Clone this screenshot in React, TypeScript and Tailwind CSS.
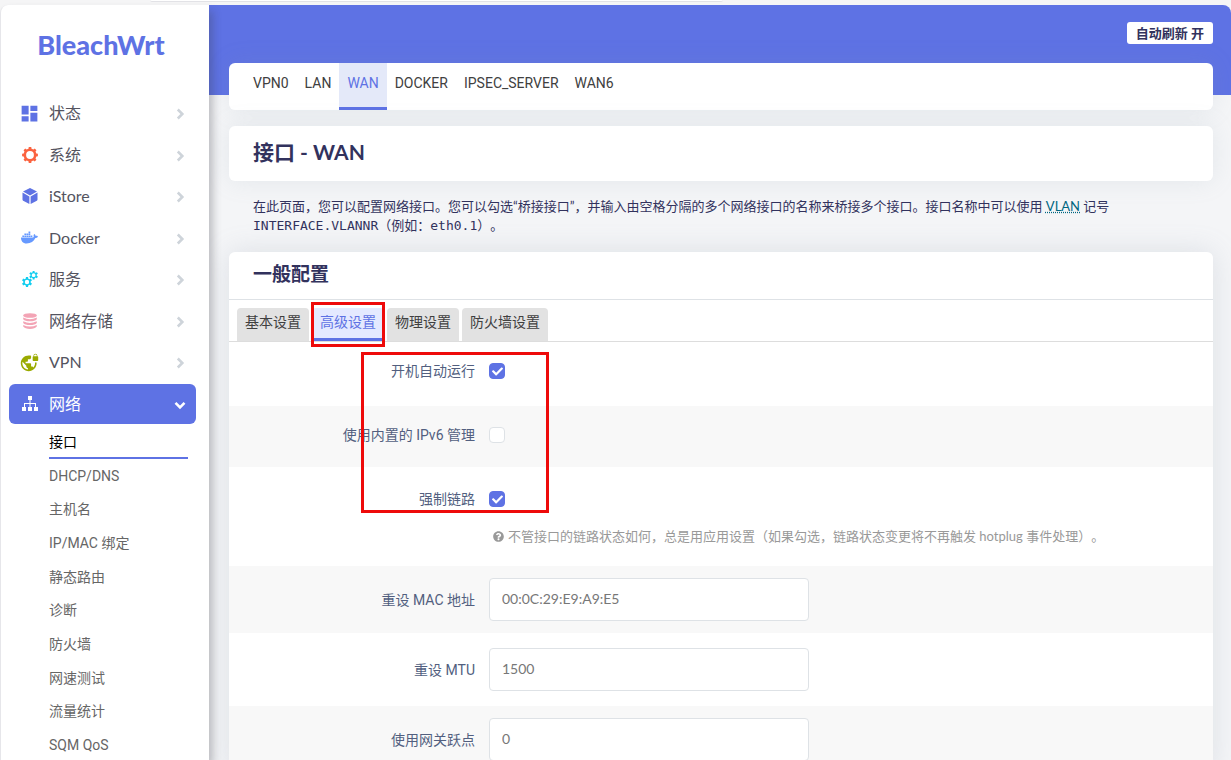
import { useState } from 'react';
import type { ReactNode } from 'react';
import { MdDashboard, MdVpnLock } from 'react-icons/md';
import { FaDocker, FaQuestionCircle, FaCheck } from 'react-icons/fa';

function gearPath(cx: number, cy: number, teeth: number, inner: number, outer: number) {
  const step = (Math.PI * 2) / teeth;
  const points: string[] = [];
  for (let i = 0; i < teeth; i++) {
    const base = i * step - Math.PI / 2;
    const corners: [number, number][] = [
      [-0.3, inner],
      [-0.2, outer],
      [0.2, outer],
      [0.3, inner],
    ];
    corners.forEach(([offset, radius]) => {
      const a = base + offset * step;
      points.push(`${(cx + radius * Math.cos(a)).toFixed(2)} ${(cy + radius * Math.sin(a)).toFixed(2)}`);
    });
  }
  return `M${points.join('L')}Z`;
}

function ring(cx: number, cy: number, r: number) {
  return `M${cx - r} ${cy}a${r} ${r} 0 1 0 ${r * 2} 0a${r} ${r} 0 1 0 ${-r * 2} 0Z`;
}

const GearIcon = () => (
  <svg viewBox="0 0 16 16" className="size-4 fill-[#fb6340]" aria-hidden="true">
    <path fillRule="evenodd" d={gearPath(8, 8, 8, 6.5, 8) + ring(8, 8, 3.9)} />
  </svg>
);

const CubeIcon = () => (
  <svg viewBox="0 0 16 16" className="size-4 fill-[#5e72e4]" aria-hidden="true">
    <path d="M8 0L15 3.6L8 7.4L1 3.6Z" />
    <path d="M.5 4.6L7.4 8.4V16L1.2 12.7Q.5 12.3.5 11.5Z" />
    <path d="M15.500 4.600L8.600 8.400V16L14.800 12.700Q15.500 12.300 15.500 11.500Z" />
  </svg>
);

const GearsIcon = () => (
  <svg viewBox="0 0 16 16" className="size-4 fill-[#11cdef]" aria-hidden="true">
    <path fillRule="evenodd" d={gearPath(5, 11, 6, 3.8, 5.2) + ring(5, 11, 2.2)} />
    <path fillRule="evenodd" d={gearPath(11.6, 4.2, 6, 3.2, 4.5) + ring(11.6, 4.2, 1.9)} />
  </svg>
);

const DisksIcon = () => (
  <svg viewBox="0 0 16 16" className="size-4 fill-[#f3a4b5]" aria-hidden="true">
    <ellipse cx="8" cy="2.500" rx="6.800" ry="2.300" />
    <path d="M1.200 4.600Q8 7.800 14.800 4.600V6.200Q13 8.300 8 8.300T1.200 6.200Z" />
    <path d="M1.200 8.300Q8 11.500 14.800 8.300V9.900Q13 12 8 12T1.200 9.900Z" />
    <path d="M1.200 12Q8 15.200 14.800 12V13.600Q13 15.900 8 15.900T1.200 13.600Z" />
  </svg>
);

const TreeIcon = () => (
  <svg viewBox="0 0 16 16" className="size-4 fill-white" aria-hidden="true">
    <path d="M6 0h4v4H8.500v3H14v4h2v4h-4v-4h1V8H8.500v3h1.500v4H6v-4h1.500V8H3v3h1v4H0v-4h2V7h5.500V4H6Z" />
  </svg>
);

const Chevron = ({ open }: { open?: boolean }) => (
  <svg
    viewBox="0 0 12 12"
    className={open ? 'mt-0.5 size-3 fill-none stroke-white' : 'mt-0.5 size-3 fill-none stroke-[#ced4da]'}
    strokeWidth="2.600"
    aria-hidden="true"
  >
    <path d={open ? 'M1.500 3.800L6 8.300L10.500 3.800' : 'M3.800 1.500L8.300 6L3.800 10.500'} />
  </svg>
);

const menu: { label: string; icon: ReactNode; active?: boolean }[] = [
  { label: '状态', icon: <MdDashboard className="size-[21px] shrink-0 text-[#5e72e4]" /> },
  { label: '系统', icon: <GearIcon /> },
  { label: 'iStore', icon: <CubeIcon /> },
  { label: 'Docker', icon: <FaDocker className="size-[17px] shrink-0 text-[#6699ff]" /> },
  { label: '服务', icon: <GearsIcon /> },
  { label: '网络存储', icon: <DisksIcon /> },
  { label: 'VPN', icon: <MdVpnLock className="size-[19px] shrink-0 text-[#9aaa00]" /> },
  { label: '网络', icon: <TreeIcon />, active: true },
];

const submenu = ['接口', 'DHCP/DNS', '主机名', 'IP/MAC 绑定', '静态路由', '诊断', '防火墙', '网速测试', '流量统计', 'SQM QoS'];
const interfaces = ['VPN0', 'LAN', 'WAN', 'DOCKER', 'IPSEC_SERVER', 'WAN6'];
const tabs = ['基本设置', '高级设置', '物理设置', '防火墙设置'];

function Sidebar() {
  return (
    <aside className="relative z-10 w-[209px] shrink-0 rounded-tl-lg border-l border-[#e6e6ea] bg-white shadow-[4px_6px_9px_rgba(60,60,70,0.3)]">
      <a href="#home" className="block h-20 pt-5 pr-2 text-center font-[Lato] text-[27px] leading-10 font-black text-[#5e72e4]">
        BleachWrt
      </a>
      <nav className="pr-[13px] pl-2">
        <ul className="mt-2 flex h-[331px] flex-col justify-between">
          {menu.map((item) => (
            <li key={item.label}>
              <a
                href="#menu"
                className={
                  item.active
                    ? 'flex h-10 items-center rounded-md bg-[#5e72e4] pr-2.5 pl-3 text-white'
                    : 'flex h-10 items-center rounded-md pr-2.5 pl-3 text-[#54545f]'
                }
              >
                <span className="flex w-[17px] justify-center">{item.icon}</span>
                <span className="ml-[11px] flex-1 text-base">{item.label}</span>
                <Chevron open={item.active} />
              </a>
            </li>
          ))}
        </ul>
        <ul className="mt-[3px] mr-2 ml-10 flex h-[335px] flex-col justify-between font-[Roboto,'Noto_Sans_CJK_SC',sans-serif] text-sm">
          {submenu.map((label, i) => (
            <li key={label}>
              <a
                href="#page"
                className={
                  i === 0
                    ? 'block h-8 border-b-2 border-[#5e72e4] leading-[30px] text-black'
                    : 'block h-8 border-b-2 border-transparent leading-[30px] text-[#666666]'
                }
              >
                {label}
              </a>
            </li>
          ))}
        </ul>
      </nav>
    </aside>
  );
}

function CheckRow({ id, label, initial }: { id: string; label: string; initial: boolean }) {
  const [checked, setChecked] = useState(initial);
  return (
    <div className="flex items-center">
      <label htmlFor={id} className="w-1/4 text-right font-[Roboto,'Noto_Sans_CJK_SC',sans-serif] text-sm">
        {label}
      </label>
      <span className="ml-3.5 grid size-4 place-items-center">
        <input
          id={id}
          type="checkbox"
          checked={checked}
          onChange={(e) => setChecked(e.target.checked)}
          className="col-start-1 row-start-1 size-4 appearance-none rounded border border-[#dee2e6] bg-white checked:border-[#5e72e4] checked:bg-[#5e72e4]"
        />
        {checked && <FaCheck className="pointer-events-none col-start-1 row-start-1 size-[11px] text-white" />}
      </span>
    </div>
  );
}

function TextRow({ id, label, placeholder }: { id: string; label: string; placeholder: string }) {
  return (
    <div className="flex items-center">
      <label htmlFor={id} className="w-1/4 text-right font-[Roboto,'Noto_Sans_CJK_SC',sans-serif] text-sm">
        {label}
      </label>
      <input
        id={id}
        type="text"
        placeholder={placeholder}
        className="ml-3.5 h-[43px] w-80 rounded border border-[#dee2e6] bg-white px-3 pb-0.5 text-sm text-[#555555] placeholder:text-[#777777]"
      />
    </div>
  );
}

export default function App() {
  return (
    <div className="flex h-screen flex-col overflow-hidden bg-[#f5f5f6] font-[Lato,'Noto_Sans_CJK_SC',sans-serif] text-[#32325d] [text-spacing-trim:space-all]">
      <div className="h-[5px] shrink-0">
        <div className="ml-[150px] h-0.5 w-[573px] rounded-b border-b border-[#e2e2e6] bg-white" />
      </div>
      <div className="flex min-h-0 flex-1">
        <Sidebar />
        <main className="min-w-0 flex-1 rounded-tr-lg bg-[#f4f5f7]">
          <header className="flex h-[90px] justify-end rounded-tr-lg bg-[#5e72e4] px-[18px] pt-[17px]">
            <button type="button" className="h-[22px] rounded-[3px] bg-white px-[9px] text-[13px] leading-5 font-bold">
              自动刷新 开
            </button>
          </header>
          <div className="-mt-8 pr-[18px] pl-5">
            <nav className="flex h-[47px] rounded-md bg-white px-4 font-[Roboto,sans-serif] text-sm text-[#404040] shadow-[0_0_24px_rgba(136,152,170,0.15)]">
              {interfaces.map((name) => (
                <a
                  key={name}
                  href="#interface"
                  className={
                    name === 'WAN'
                      ? 'border-b-[3px] border-[#5e72e4] bg-[#e4e9f9] px-2 leading-10 text-[#5e72e4]'
                      : 'px-2 leading-10'
                  }
                >
                  {name}
                </a>
              ))}
            </nav>
            <h2 className="mt-4 h-[55px] rounded-md bg-white px-6 text-[21px] leading-[51px] font-bold shadow-[0_0_24px_rgba(136,152,170,0.15)]">
              接口 - WAN
            </h2>
            <p className="mt-4 px-6 text-[13px] leading-[19px]">
              在此页面，您可以配置网络接口。您可以勾选“桥接接口”，并输入由空格分隔的多个网络接口的名称来桥接多个接口。接口名称中可以使用{' '}
              <abbr className="text-[#006680] underline decoration-dotted">VLAN</abbr> 记号{' '}
              <code className="font-['DejaVu_Sans_Mono','Noto_Sans_CJK_SC',monospace]">INTERFACE.VLANNR</code>（例如：
              <code className="font-['DejaVu_Sans_Mono',monospace]">eth0.1</code>）。
            </p>
            <section className="mt-[17px] rounded-md bg-white shadow-[0_0_28px_rgba(136,152,170,0.22)]">
              <h3 className="h-12 border-b border-[#dee2e6] px-6 text-[19px] leading-[43px] font-bold">一般配置</h3>
              <div role="tablist" className="flex h-[42px] items-end gap-[3px] border-b border-[#dddddd] px-2">
                {tabs.map((name) =>
                  name === '高级设置' ? (
                    <div key={name} className="relative">
                      <button
                        type="button"
                        role="tab"
                        aria-selected="true"
                        className="block h-[33px] rounded-t border-b-[3px] border-[#5e72e4] bg-[#e4e9ff] px-2 pb-0.5 text-sm leading-7 text-[#5e72e4]"
                      >
                        {name}
                      </button>
                      <span className="pointer-events-none absolute -inset-x-px -top-1.5 -bottom-1.5 border-[3px] border-[#ee0a0a]" />
                    </div>
                  ) : (
                    <button
                      key={name}
                      type="button"
                      role="tab"
                      aria-selected="false"
                      className="h-[33px] rounded-t border-b-[3px] border-[#e2e2e2] bg-[#e2e2e2] px-2 pb-0.5 text-sm leading-7 text-[#404040]"
                    >
                      {name}
                    </button>
                  ),
                )}
              </div>
              <form className="relative text-[#525f7f]">
                <div className="h-16 pt-[19px]">
                  <CheckRow id="auto" label="开机自动运行" initial={true} />
                </div>
                <div className="h-[61px] bg-[#f8f8f8] pt-[19px]">
                  <CheckRow id="ipv6" label="使用内置的 IPv6 管理" initial={false} />
                </div>
                <div className="h-[99px] pt-[22px]">
                  <CheckRow id="force" label="强制链路" initial={true} />
                  <p className="mt-[17px] flex items-center gap-1 pl-[264px] text-[13px] leading-5 text-[#999999]">
                    <FaQuestionCircle className="size-[11px]" />
                    不管接口的链路状态如何，总是用应用设置（如果勾选，链路状态变更将不再触发 hotplug 事件处理）。
                  </p>
                </div>
                <div className="h-[67px] bg-[#f8f8f8] pt-3">
                  <TextRow id="mac" label="重设 MAC 地址" placeholder="00:0C:29:E9:A9:E5" />
                </div>
                <div className="h-[73px] pt-[15px]">
                  <TextRow id="mtu" label="重设 MTU" placeholder="1500" />
                </div>
                <div className="h-[67px] bg-[#f8f8f8] pt-3">
                  <TextRow id="metric" label="使用网关跃点" placeholder="0" />
                </div>
                <span className="pointer-events-none absolute top-[10px] left-[132px] h-[161px] w-[188px] border-[3px] border-[#ee0a0a]" />
              </form>
            </section>
          </div>
        </main>
      </div>
    </div>
  );
}
